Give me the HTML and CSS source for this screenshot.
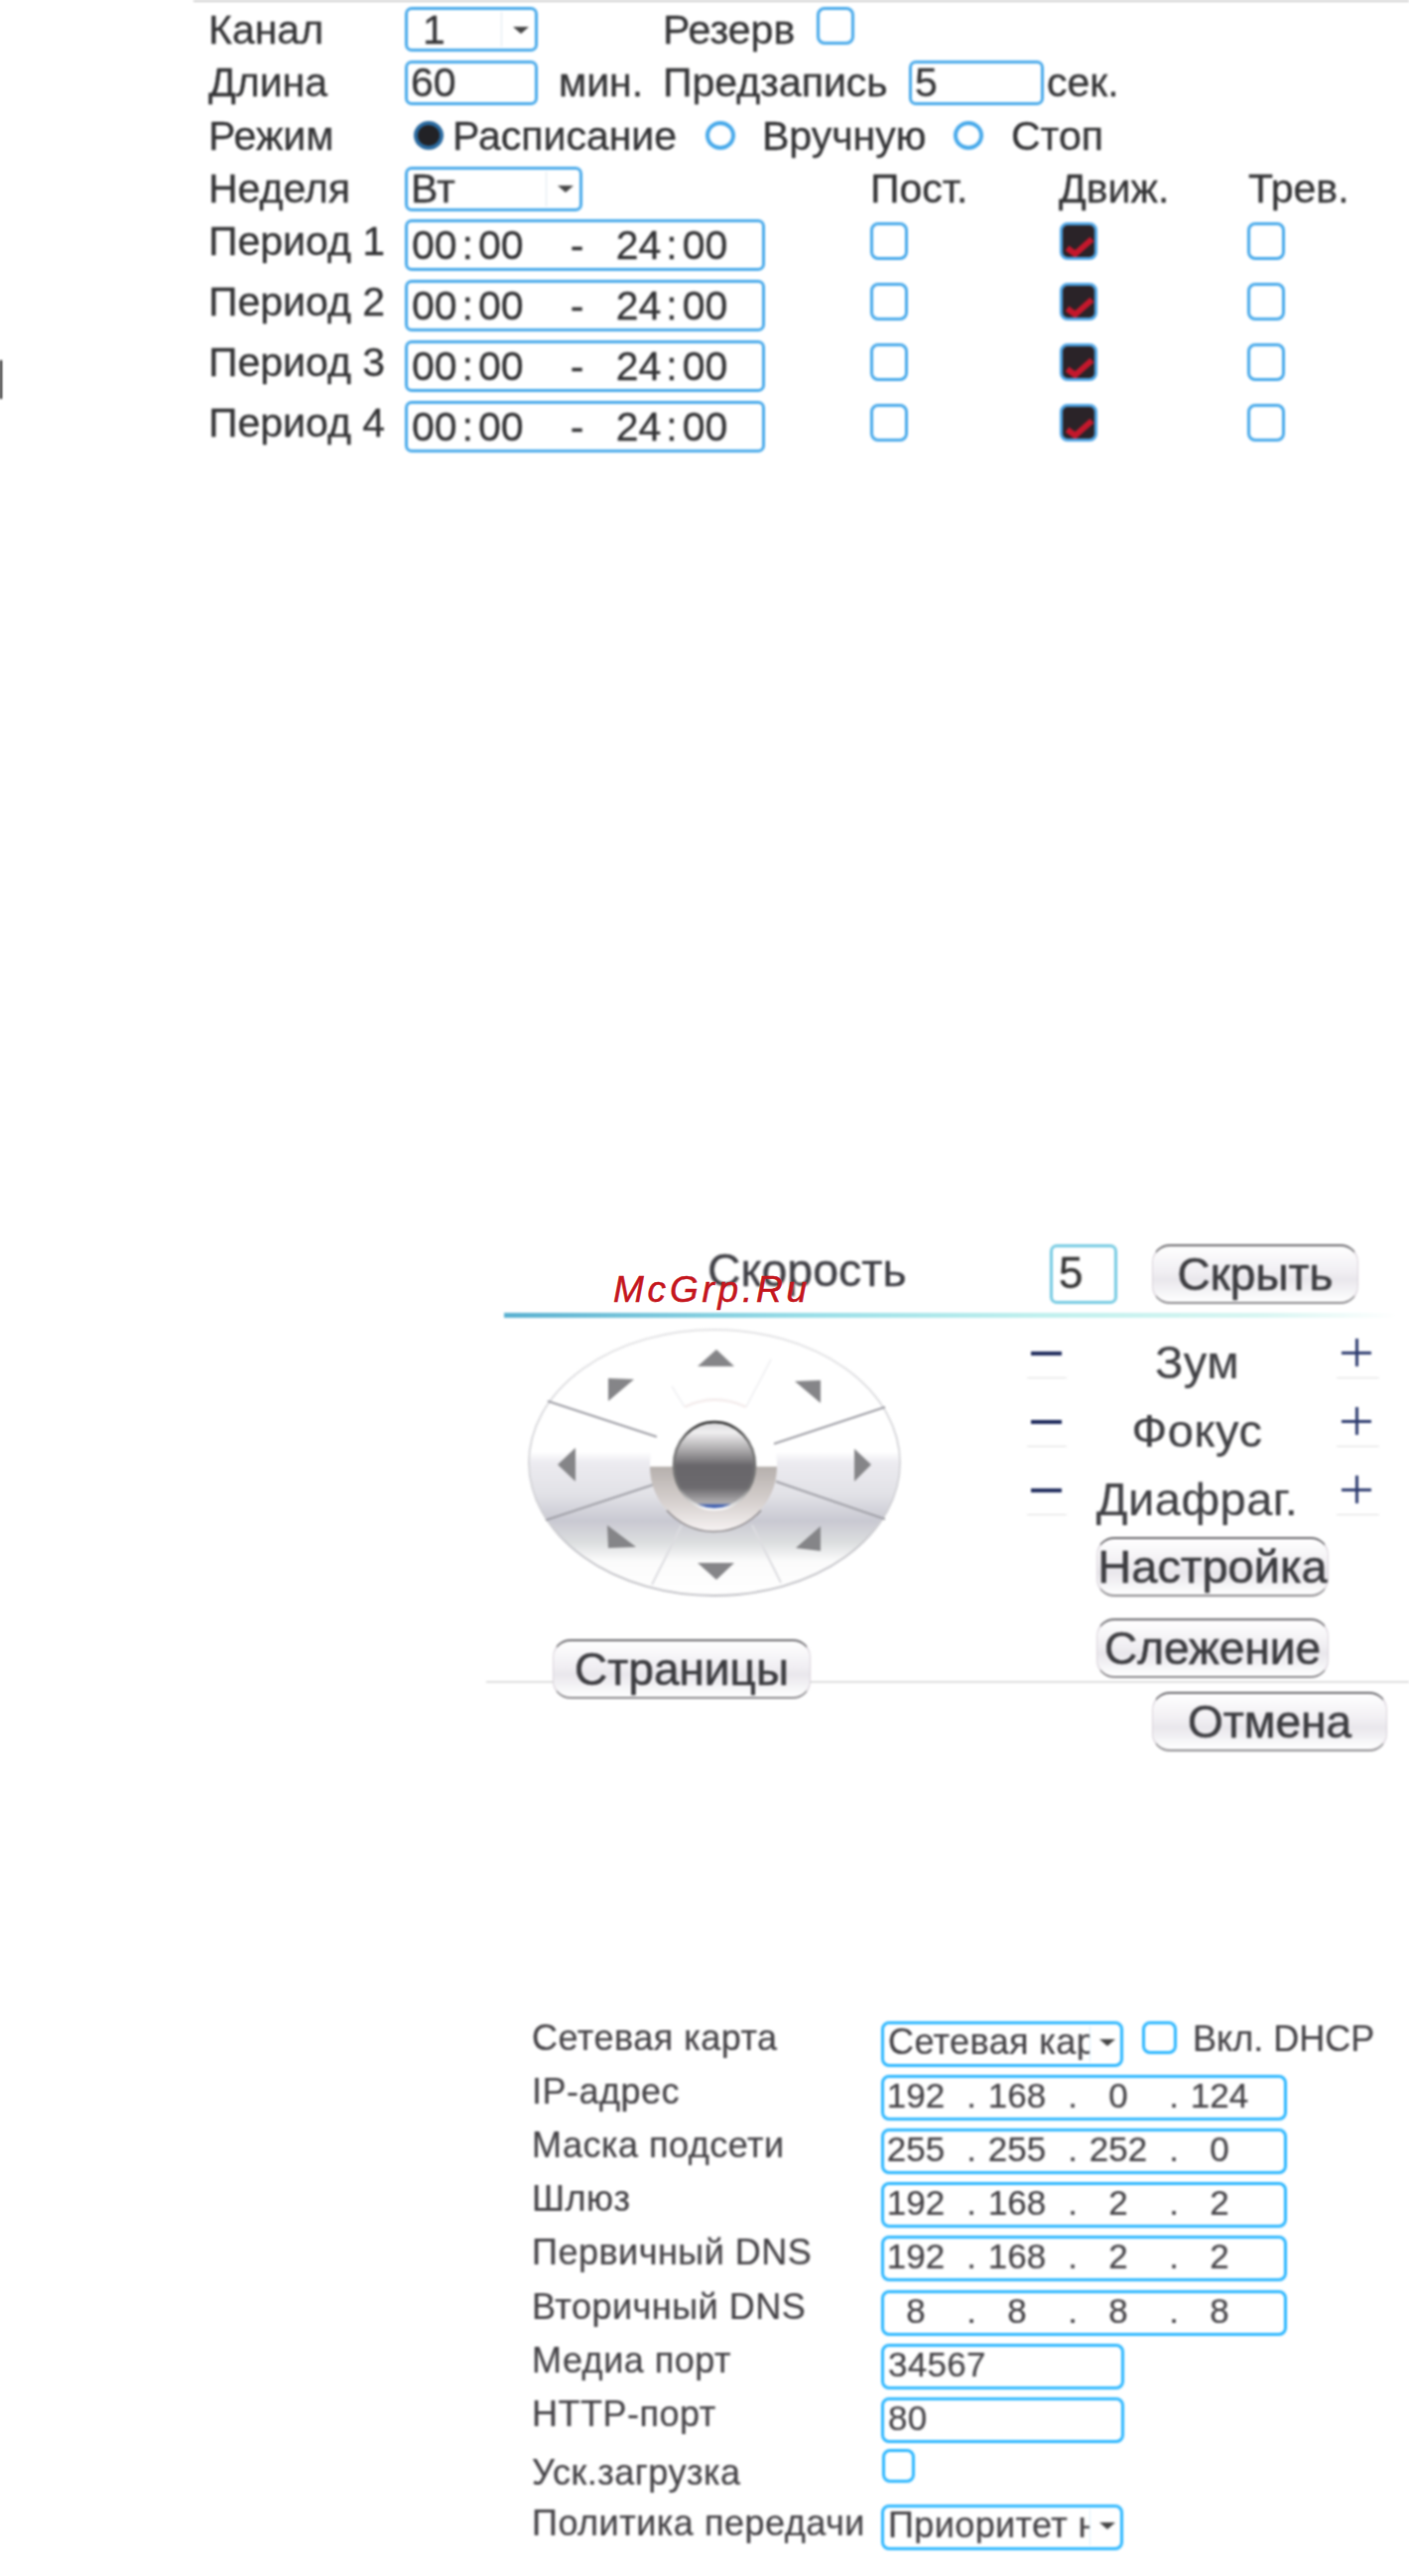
FILE: index.html
```html
<!DOCTYPE html>
<html lang="ru">
<head>
<meta charset="utf-8">
<title>Настройки</title>
<link rel="stylesheet" href="styles.css">
</head>
<body>
<div class="page">
  <div class="soft">
    <div class="edge-mark"></div>

    <section class="record">
      <div class="row">
        <span class="lbl">Канал</span>
        <div class="box sel w134"><span class="val one">1</span><span class="drop"></span></div>
        <span class="m-reserve">Резерв</span>
        <span class="chk m22 raised"></span>
      </div>
      <div class="row">
        <span class="lbl">Длина</span>
        <div class="box w134"><span class="val">60</span></div>
        <span class="m21 w105">мин.</span>
        <span class="w248">Предзапись</span>
        <div class="box w136"><span class="val">5</span></div>
        <span class="m3">сек.</span>
      </div>
      <div class="row">
        <span class="lbl">Режим</span>
        <span class="radio on m9"></span>
        <span class="m9 w255">Расписание</span>
        <span class="radio"></span>
        <span class="m27 w193">Вручную</span>
        <span class="radio"></span>
        <span class="m28">Стоп</span>
      </div>
      <div class="row">
        <span class="lbl">Неделя</span>
        <div class="box sel w179"><span class="val">Вт</span><span class="drop"></span></div>
        <span class="col-a">Пост.</span>
        <span class="col-b">Движ.</span>
        <span class="col-c">Трев.</span>
      </div>
      <div class="period first">
        <span class="lbl up">Период 1</span>
        <div class="box time"><span>00<i>:</i>00</span><span class="dash">-</span><span class="end">24<i>:</i>00</span></div>
        <span class="chk up c1"></span><span class="chk checked up c2"><svg viewBox="0 0 37 38"><path d="M7 26l8 6L32 17" /></svg></span><span class="chk up c3"></span>
      </div>
      <div class="period">
        <span class="lbl up">Период 2</span>
        <div class="box time"><span>00<i>:</i>00</span><span class="dash">-</span><span class="end">24<i>:</i>00</span></div>
        <span class="chk up c1"></span><span class="chk checked up c2"><svg viewBox="0 0 37 38"><path d="M7 26l8 6L32 17" /></svg></span><span class="chk up c3"></span>
      </div>
      <div class="period">
        <span class="lbl up">Период 3</span>
        <div class="box time"><span>00<i>:</i>00</span><span class="dash">-</span><span class="end">24<i>:</i>00</span></div>
        <span class="chk up c1"></span><span class="chk checked up c2"><svg viewBox="0 0 37 38"><path d="M7 26l8 6L32 17" /></svg></span><span class="chk up c3"></span>
      </div>
      <div class="period">
        <span class="lbl up">Период 4</span>
        <div class="box time"><span>00<i>:</i>00</span><span class="dash">-</span><span class="end">24<i>:</i>00</span></div>
        <span class="chk up c1"></span><span class="chk checked up c2"><svg viewBox="0 0 37 38"><path d="M7 26l8 6L32 17" /></svg></span><span class="chk up c3"></span>
      </div>
    </section>

    <section class="ptz">
      <div class="base-line"></div>
      <div class="ptz-head">
        <span class="speed">Скорость</span>
        <div class="speed-box">5</div>
        <button class="btn hide-btn" type="button">Скрыть</button>
      </div>
      <div class="grad-line"></div>
      <div class="ptz-body">
        <div class="ptz-left">
          <svg class="joy" viewBox="530 1337 380 274" aria-hidden="true">
            <defs>
              <linearGradient id="dish" x1="0" y1="0" x2="0" y2="1">
                <stop offset="0" stop-color="#fff"/>
                <stop offset=".46" stop-color="#fff"/>
                <stop offset=".5" stop-color="#ecebf0"/>
                <stop offset=".62" stop-color="#e2e2e7"/>
                <stop offset=".72" stop-color="#c9c9d2"/>
                <stop offset=".8" stop-color="#dcdedf"/>
                <stop offset=".87" stop-color="#fbfbfb"/>
                <stop offset="1" stop-color="#fff"/>
              </linearGradient>
              <linearGradient id="rim" x1="0" y1="0" x2="0" y2="1">
                <stop offset="0" stop-color="#e2e2e4"/>
                <stop offset=".6" stop-color="#d4d4d8"/>
                <stop offset="1" stop-color="#bdbdc2"/>
              </linearGradient>
              <linearGradient id="lower" x1="0" y1="0" x2="0" y2="1">
                <stop offset="0" stop-color="#b6b0ad"/>
                <stop offset=".55" stop-color="#d6d0ce"/>
                <stop offset="1" stop-color="#f6f2f2"/>
              </linearGradient>
              <linearGradient id="ball" x1="0" y1="0" x2="0" y2="1">
                <stop offset="0" stop-color="#d9d9db"/>
                <stop offset=".12" stop-color="#f0eff0"/>
                <stop offset=".33" stop-color="#a8a6a8"/>
                <stop offset=".5" stop-color="#68666a"/>
                <stop offset=".75" stop-color="#6c6a6e"/>
                <stop offset=".93" stop-color="#b0aeb0"/>
                <stop offset=".96" stop-color="#3a5cb0"/>
                <stop offset="1" stop-color="#2a4ca8"/>
              </linearGradient>
              <linearGradient id="ballrim" x1="0" y1="0" x2="0" y2="1">
                <stop offset="0" stop-color="#333"/>
                <stop offset=".25" stop-color="#777"/>
                <stop offset=".75" stop-color="#777"/>
                <stop offset="1" stop-color="#fff"/>
              </linearGradient>
            </defs>
            <ellipse cx="720" cy="1474" rx="187" ry="134" fill="url(#dish)" stroke="url(#rim)" stroke-width="2"/>
            <g class="faint">
              <path d="M657 1597L687 1537M787 1595L758 1537"/>
            </g>
            <g class="fainter">
              <path d="M677 1397L690 1418M777 1370L752 1418"/>
            </g>
            <g class="spoke">
              <path d="M552 1412L662 1448M780 1455L892 1418M550 1532L662 1495M782 1493L892 1531"/>
            </g>
            <path d="M655 1478A64 66 0 0 1 783 1478Z" fill="#fff"/>
            <path d="M690 1418Q720 1403 752 1418" fill="none" stroke="#f5eeee" stroke-width="3"/>
            <path d="M655 1478A64 65 0 0 0 783 1478Z" fill="url(#lower)"/>
            <path d="M672 1522A64 65 0 0 0 767 1522" fill="none" stroke="#8e8a8c" stroke-width="1.5"/>
            <ellipse cx="720" cy="1477" rx="41" ry="44" fill="url(#ball)" stroke="url(#ballrim)" stroke-width="2.5"/>
            <g class="arrows">
              <path d="M703 1377L722 1360L740 1377Z"/>
              <path d="M703 1575H740L722 1592Z"/>
              <path d="M580 1459L562 1476L580 1493Z"/>
              <path d="M861 1460L878 1476L861 1493Z"/>
              <path d="M613 1389L639 1390L613 1412Z"/>
              <path d="M801 1392L827 1391V1414Z"/>
              <path d="M612 1537L641 1559L613 1560Z"/>
              <path d="M802 1560L827 1538V1563Z"/>
            </g>
          </svg>
          <button class="btn pages-btn" type="button">Страницы</button>
        </div>
        <div class="ptz-right">
          <div class="adj"><span class="sign"><b class="minus"></b></span><span class="adj-name">Зум</span><span class="sign"><b class="plus"></b></span></div>
          <div class="adj"><span class="sign"><b class="minus"></b></span><span class="adj-name">Фокус</span><span class="sign"><b class="plus"></b></span></div>
          <div class="adj"><span class="sign"><b class="minus"></b></span><span class="adj-name">Диафраг.</span><span class="sign"><b class="plus"></b></span></div>
          <button class="btn wide-btn first-wide" type="button">Настройка</button>
          <button class="btn wide-btn second-wide" type="button">Слежение</button>
          <button class="btn cancel-btn" type="button">Отмена</button>
        </div>
      </div>
    </section>

    <section class="net">
      <span class="nl">Сетевая карта</span>
      <div class="fld">
        <div class="nbox nsel"><span class="clip">Сетевая карта</span><span class="drop"></span></div>
        <span class="chk dhcp-chk"></span>
        <span class="dhcp-text">Вкл. DHCP</span>
      </div>
      <span class="nl">IP-адрес</span>
      <div class="fld"><div class="nbox ip"><span>192</span><u>.</u><span>168</span><u>.</u><span>0</span><u>.</u><span>124</span></div></div>
      <span class="nl">Маска подсети</span>
      <div class="fld"><div class="nbox ip"><span>255</span><u>.</u><span>255</span><u>.</u><span>252</span><u>.</u><span>0</span></div></div>
      <span class="nl">Шлюз</span>
      <div class="fld"><div class="nbox ip"><span>192</span><u>.</u><span>168</span><u>.</u><span>2</span><u>.</u><span>2</span></div></div>
      <span class="nl">Первичный DNS</span>
      <div class="fld"><div class="nbox ip"><span>192</span><u>.</u><span>168</span><u>.</u><span>2</span><u>.</u><span>2</span></div></div>
      <span class="nl">Вторичный DNS</span>
      <div class="fld"><div class="nbox ip"><span>8</span><u>.</u><span>8</span><u>.</u><span>8</span><u>.</u><span>8</span></div></div>
      <span class="nl">Медиа порт</span>
      <div class="fld"><div class="nbox short">34567</div></div>
      <span class="nl">HTTP-порт</span>
      <div class="fld"><div class="nbox short">80</div></div>
      <span class="nl low">Уск.загрузка</span>
      <div class="fld top"><span class="chk net-chk"></span></div>
      <span class="nl last">Политика передачи</span>
      <div class="fld"><div class="nbox nsel"><span class="clip">Приоритет набора</span><span class="drop"></span></div></div>
    </section>
  </div>
  <div class="watermark">McGrp.Ru</div>
</div>
</body>
</html>
```

FILE: styles.css
```css
* { box-sizing: border-box; }
html, body { margin: 0; padding: 0; background: #fff; }
body { font-family: "Liberation Sans", Arial, sans-serif; color: #333335; }
.page { position: relative; width: 1420px; height: 2596px; overflow: hidden; }
.soft { filter: blur(.8px); height: 100%; }

.edge-mark { position: absolute; left: 0; top: 363px; width: 2px; height: 39px; background: #000; }

/* record settings */
.record { margin-left: 195px; padding: 1px 0 0 15px; border-top: 2px solid #cfcfcf; font-size: 41px; line-height: 46px; height: 470px; -webkit-text-stroke: .3px #333335; }
.row { display: flex; align-items: center; height: 53.5px; white-space: nowrap; }
.row > * { flex: none; }
.period { display: flex; align-items: center; height: 61px; white-space: nowrap; }
.period.first { margin-top: -1px; }
.lbl { width: 198px; flex: none; }
.up { position: relative; top: -4px; }
.raised { position: relative; top: -4px; }
.box { flex: none; height: 45px; border: 3px solid #45a8ea; border-radius: 7px; display: flex; align-items: center; padding-left: 3px; background: #fff; line-height: 40px; }
.sel { position: relative; }
.w134 { width: 134px; }
.w136 { width: 136px; }
.w179 { width: 179px; }
.w105 { width: 105px; }
.w248 { width: 248px; }
.w255 { width: 255px; }
.w193 { width: 193px; }
.val.one { margin-left: 12px; }
.m-reserve { margin-left: 126px; }
.m21 { margin-left: 21px; }
.m22 { margin-left: 22px; }
.m3 { margin-left: 3px; }
.m9 { margin-left: 9px; }
.m27 { margin-left: 27px; }
.m28 { margin-left: 28px; }
.drop { position: absolute; right: 6px; top: 50%; margin-top: -3px; width: 0; height: 0; border-left: 8px solid transparent; border-right: 8px solid transparent; border-top: 7px solid #444; }
.sel::after { content: ""; position: absolute; right: 33px; top: 2px; bottom: 2px; width: 1px; background: #dfe9f0; }

.radio { flex: none; width: 30px; height: 29px; border: 4px solid #45a8ea; border-radius: 50%; background: #fff; }
.radio.on { background: #222226; border-color: #2a6aa0; }

.chk { display: block; flex: none; width: 38px; height: 38px; border: 3px solid #45a8ea; border-radius: 8px; background: #fff; }
.checked { background: #2a2328; border-color: #4fa6e6; overflow: hidden; }
.checked svg { display: block; margin: -3px; width: 38px; height: 38px; }
.checked path { fill: none; stroke: #c4182c; stroke-width: 6; }

.col-a { margin-left: 290px; width: 190px; }
.col-b { width: 191px; }

.time { width: 363px; height: 52px; padding-left: 4px; line-height: 38px; }
.time i { font-style: normal; margin: 0 5px; }
.dash { margin-left: 47px; width: 11px; }
.end { margin-left: 35px; }
.c1 { margin-left: 106px; }
.c2 { margin-left: 153px; }
.c3 { margin-left: 151px; }

/* ptz panel */
.ptz { position: relative; margin-top: 784px; height: 510px; }
.base-line { position: absolute; left: 490px; right: 0; top: 440px; height: 2px; background: #ddd; }
.ptz-head { display: flex; align-items: center; height: 60px; margin-left: 713px; }
.speed { position: relative; top: -4px; width: 345px; font-size: 46.5px; color: #3e3e44; -webkit-text-stroke: .3px #3e3e44; }
.speed-box { width: 68px; height: 60px; border: 3px solid #74cae2; border-radius: 7px; font-size: 44px; line-height: 52px; padding-left: 6px; color: #333; -webkit-text-stroke: .3px #333; }
.hide-btn { width: 208px; margin-left: 35px; }
.grad-line { height: 5px; margin: 9px 13px 0 508px; background: linear-gradient(90deg, #58b0d0 0, #9adfe8 35%, #bff0ee 60%, #d8f6f2 85%, #fff 100%); }

.btn { position: relative; display: block; height: 60px; padding: 0; font: 46px/52px "Liberation Sans", Arial, sans-serif; color: #3c3c40; white-space: nowrap; text-align: center; border: 1px solid #d9d2da; border-top: 2px solid #67656a; border-bottom: 2px solid #88868a; border-radius: 18px; background: linear-gradient(180deg, #fff 0, #f1eff3 45%, #e9e7ec 60%, #fff 100%); -webkit-text-stroke: .6px #3c3c40; }

.ptz-body { display: flex; align-items: flex-start; }
.ptz-left { width: 1035px; flex: none; padding-left: 530px; }
.joy { display: block; width: 380px; height: 274px; margin-top: 9px; overflow: visible; }
.spoke path { fill: none; stroke: #9f9fa6; stroke-width: 2; }
.faint path { fill: none; stroke: #dcdce0; stroke-width: 2; }
.fainter path { fill: none; stroke: #f2f2f4; stroke-width: 2; }
.arrows path { fill: #858588; }
.pages-btn { width: 260px; margin: 41px 0 0 27px; }

.ptz-right { width: 385px; padding-top: 12px; }
.adj { display: flex; height: 69px; width: 355px; justify-content: space-between; position: relative; }
.sign { position: relative; display: block; width: 40px; height: 49px; border-bottom: 1px solid #ddd; }
.adj .sign:last-child { width: 43px; }
.adj-name { position: absolute; left: 0; top: 5px; width: 343px; text-align: center; font-size: 47px; letter-spacing: .5px; color: #404044; -webkit-text-stroke: .2px #404044; }
.minus { position: absolute; left: 4px; top: 22px; width: 31px; height: 4px; background: #1e2a5c; }
.plus { position: absolute; left: 5px; top: 22px; width: 30px; height: 3px; background: #2c3a6e; }
.plus::after { content: ""; position: absolute; left: 14px; top: -13px; width: 3px; height: 28px; background: #2c3a6e; }
.wide-btn { width: 234px; margin-left: 70px; font-size: 47px; }
.first-wide { margin-top: 2px; }
.second-wide { margin-top: 22px; font-size: 46px; }
.cancel-btn { width: 237px; margin: 14px 0 0 126px; }

/* network */
.net { display: grid; grid-template-columns: 352px 1fr; grid-auto-rows: 54.1px; margin: 269px 0 0 536px; font-size: 36px; align-items: center; color: #444246; -webkit-text-stroke: .2px #444246; }
.nl { white-space: nowrap; position: relative; top: -6px; letter-spacing: .5px; }
.nl.low { top: -1px; }
.nl.last { top: -4px; }
.fld { display: flex; align-items: center; }
.fld.top { align-self: start; padding: 2px 0 0 1px; }
.nbox { height: 46px; border: 3px solid #2ab6ff; border-radius: 8px; line-height: 36px; background: #fff; flex: none; color: #454347; font-size: 35px; letter-spacing: .3px; }
.nsel { position: relative; width: 244px; padding-left: 4px; font-size: 36px; letter-spacing: .4px; }
.nsel .clip { display: block; width: 203px; overflow: hidden; white-space: nowrap; }
.nsel .drop { right: 5px; margin-top: -5px; }
.nsel::after { content: ""; position: absolute; right: 30px; top: 2px; bottom: 2px; width: 1px; background: #dcf0fb; }
.ip { width: 409px; display: flex; letter-spacing: 0; }
.ip span { width: 64px; text-align: center; }
.ip u { display: block; width: 38px; padding-left: 10px; text-align: center; text-decoration: none; }
.short { width: 245px; padding-left: 4px; }
.dhcp-chk { width: 35px; height: 33px; margin: -14px 0 0 19px; border-color: #2ab6ff; }
.dhcp-text { position: relative; top: -5px; margin-left: 16px; white-space: nowrap; font-size: 36px; }
.net-chk { width: 33px; height: 34px; border-color: #2ab6ff; }

.watermark { position: absolute; left: 618px; top: 1278px; font: italic 37px/44px "Liberation Sans", Arial, sans-serif; letter-spacing: 3.8px; color: #c5161d; white-space: nowrap; -webkit-text-stroke: .5px #c5161d; }
```
